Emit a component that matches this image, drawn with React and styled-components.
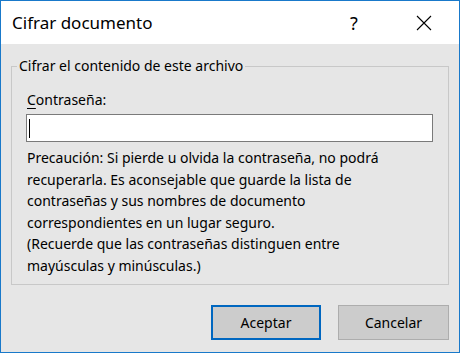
import React from 'react';
import styled, { createGlobalStyle } from 'styled-components';

const Global = createGlobalStyle`
  html, body { margin: 0; padding: 0; }
  body { font-family: "Noto Sans", "Liberation Sans", sans-serif; color: #000; }
  * { box-sizing: border-box; }
`;

const Window = styled.div`
  width: 460px;
  height: 353px;
  border: 1px solid #1979ca;
  display: flex;
  flex-direction: column;
  background: #e6e6e6;
`;

const TitleBar = styled.div`
  height: 43px;
  background: #fff;
  display: flex;
  align-items: center;
  padding-left: 11px;
`;

const Title = styled.div`
  flex: 1;
  font-size: 17px;
  color: #000;
`;

const TitleButton = styled.div`
  width: 70px;
  height: 43px;
  display: flex;
  align-items: center;
  justify-content: center;
  font-size: 18px;
`;

const Body = styled.div`
  flex: 1;
  padding: 0 10px 12px;
  display: flex;
  flex-direction: column;
`;

const Group = styled.fieldset`
  margin: 12px 0 0;
  padding: 14px 15px 7px 14px;
  border: 1px solid #c8c8c8;
  min-width: 0;
`;

const Legend = styled.legend`
  padding: 0 2px;
  margin-left: -9px;
  font-size: 14px;
  line-height: 20px;
`;

const Label = styled.div`
  font-size: 14px;
  line-height: 20px;
  padding-left: 1px;
  u { text-decoration-thickness: 1px; text-underline-offset: 3px; }
`;

const Input = styled.div`
  margin-top: 4px;
  height: 28px;
  background: #fff;
  border: 1px solid #7a7a7a;
  display: flex;
  align-items: center;
  padding-left: 2px;
`;

const Caret = styled.div`
  width: 1px;
  height: 19px;
  background: #000;
`;

const Note = styled.p`
  margin: 5px 0 0;
  padding-left: 1px;
  font-size: 14px;
  line-height: 21.6px;
`;

const Buttons = styled.div`
  margin-top: auto;
  display: flex;
  justify-content: flex-end;
  gap: 17px;
`;

const Button = styled.div`
  width: ${p => p.w}px;
  height: 35px;
  background: #cccccc;
  border: ${p => (p.primary ? '2px solid #0067c0' : '1px solid #adadad')};
  display: flex;
  align-items: center;
  justify-content: center;
  font-size: 14px;
`;

export default function App() {
  return (
    <>
      <Global />
      <Window>
        <TitleBar>
          <Title>Cifrar documento</Title>
          <TitleButton>?</TitleButton>
          <TitleButton>
            <svg width="16" height="16" viewBox="0 0 16 16">
              <path d="M1 1 L15 15 M15 1 L1 15" stroke="#000" strokeWidth="1.1" fill="none" />
            </svg>
          </TitleButton>
        </TitleBar>
        <Body>
          <Group>
            <Legend>Cifrar el contenido de este archivo</Legend>
            <Label><u>C</u>ontraseña:</Label>
            <Input><Caret /></Input>
            <Note>
              Precaución: Si pierde u olvida la contraseña, no podrá<br />
              recuperarla. Es aconsejable que guarde la lista de<br />
              contraseñas y sus nombres de documento<br />
              correspondientes en un lugar seguro.<br />
              (Recuerde que las contraseñas distinguen entre<br />
              mayúsculas y minúsculas.)
            </Note>
          </Group>
          <Buttons>
            <Button primary w={110}>Aceptar</Button>
            <Button w={111}>Cancelar</Button>
          </Buttons>
        </Body>
      </Window>
    </>
  );
}
